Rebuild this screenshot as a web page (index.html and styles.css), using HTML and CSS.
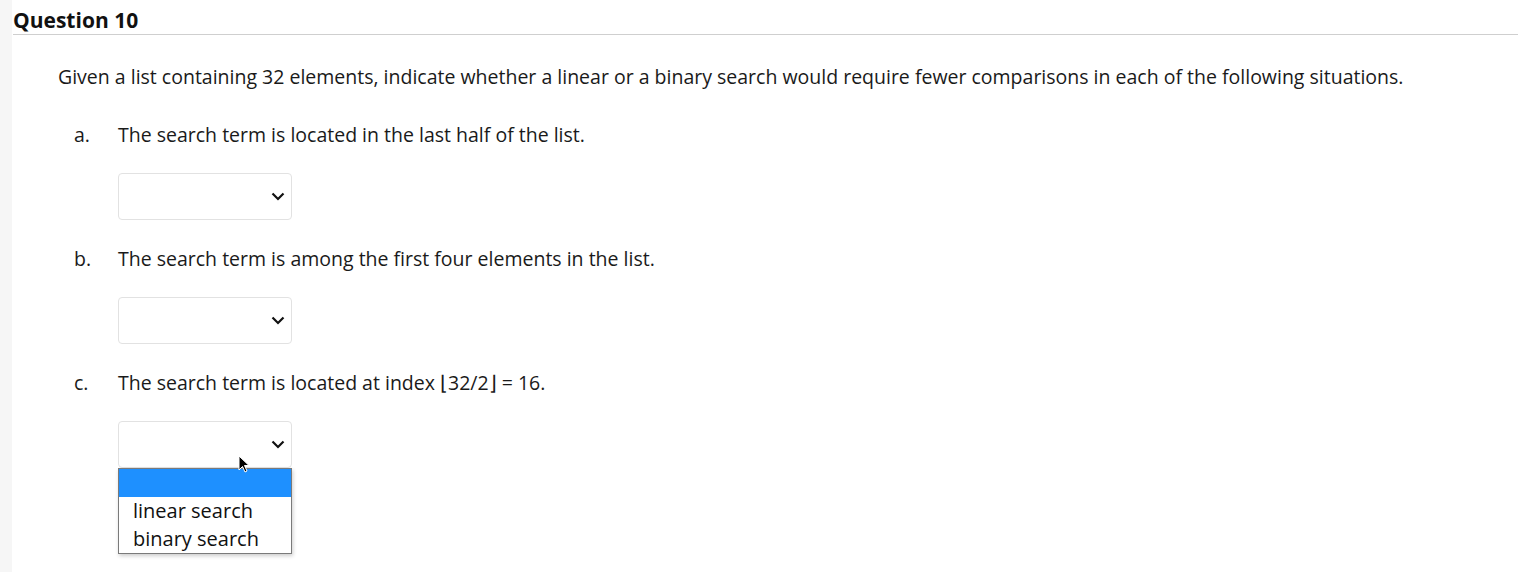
FILE: index.html
```html
<!DOCTYPE html>
<html lang="en">
<head>
    <meta charset="UTF-8">
    <title>Question 10</title>
    <link rel="stylesheet" href="styles.css">
</head>
<body>
    <div class="page">
        <div class="rail"></div>
        <main class="question">
            <h2 class="question-title">Question 10</h2>
            <p class="prompt">Given a list containing 32 elements, indicate whether a linear or a binary search would require fewer comparisons in each of the following situations.</p>

            <ol class="parts">
                <li class="part">
                    <div class="part-text"><span class="part-label">a.</span>The search term is located in the last half of the list.</div>
                    <div class="picker">
                        <svg class="chevron" width="14" height="9" viewBox="0 0 14 9"><path d="M1.5 1.5 L7 7 L12.5 1.5" fill="none" stroke="#111" stroke-width="2.2"/></svg>
                    </div>
                </li>
                <li class="part">
                    <div class="part-text"><span class="part-label">b.</span>The search term is among the first four elements in the list.</div>
                    <div class="picker">
                        <svg class="chevron" width="14" height="9" viewBox="0 0 14 9"><path d="M1.5 1.5 L7 7 L12.5 1.5" fill="none" stroke="#111" stroke-width="2.2"/></svg>
                    </div>
                </li>
                <li class="part">
                    <div class="part-text"><span class="part-label">c.</span>The search term is located at index ⌊32/2⌋ = 16.</div>
                    <div class="picker open">
                        <svg class="chevron" width="14" height="9" viewBox="0 0 14 9"><path d="M1.5 1.5 L7 7 L12.5 1.5" fill="none" stroke="#111" stroke-width="2.2"/></svg>
                        <ul class="menu">
                            <li class="option selected">&nbsp;</li>
                            <li class="option">linear search</li>
                            <li class="option">binary search</li>
                        </ul>
                        <svg class="cursor" width="12" height="19" viewBox="0 0 12 19"><path d="M1 1 L1 15 L4.5 11.5 L7 17 L9 16 L6.5 10.5 L11 10.5 Z" fill="#000" stroke="#fff" stroke-width="1"/></svg>
                    </div>
                </li>
            </ol>
        </main>
    </div>
</body>
</html>
```

FILE: styles.css
```css
body {
    margin: 0;
    font-family: "Open Sans", "Noto Sans", sans-serif;
    color: #1a1a1a;
    background: #fff;
}
.page {
    display: flex;
    min-height: 572px;
}
.rail {
    width: 12px;
    flex: none;
    background-color: #f6f6f6;
}
.question {
    flex: 1;
    padding-left: 1px;
}
.question-title {
    margin: 0;
    padding-top: 7px;
    font-size: 21px;
    line-height: 27px;
    font-weight: 700;
    color: #111;
    border-bottom: 1px solid #cfcfcf;
}
.prompt {
    margin: 30px 0 0 45px;
    font-size: 19.5px;
    line-height: 24px;
}
.parts {
    list-style: none;
    margin: 34px 0 0 0;
    padding: 0 0 0 61px;
}
.part {
    margin-bottom: 27px;
}
.part-text {
    display: flex;
    font-size: 19.5px;
    line-height: 24px;
}
.part-label {
    width: 44px;
}
.picker {
    position: relative;
    margin: 26px 0 0 44px;
    width: 172px;
    height: 45px;
    border: 1px solid #e2e2e2;
    border-radius: 4px;
    background: #fff;
}
.chevron {
    position: absolute;
    right: 6px;
    top: 18px;
}
.menu {
    position: absolute;
    left: -1px;
    top: 46px;
    width: 172px;
    margin: 0;
    padding: 0;
    list-style: none;
    border: 1px solid #7a7a7a;
    background: #fff;
    box-shadow: 1px 2px 4px rgba(0, 0, 0, 0.2);
    z-index: 2;
}
.option {
    height: 28px;
    padding-left: 14px;
    font-size: 20px;
    line-height: 28px;
    color: #111;
}
.option.selected {
    background-color: #1e90ff;
}
.cursor {
    position: absolute;
    left: 119px;
    top: 33px;
    z-index: 3;
}
```
